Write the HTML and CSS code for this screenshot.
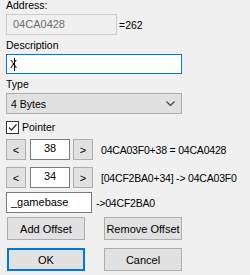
FILE: index.html
```html
<!DOCTYPE html>
<html lang="en">
<head>
  <meta charset="UTF-8">
  <title>Change address</title>
  <link rel="stylesheet" href="styles.css">
</head>
<body>
  <div class="dialog">
    <div class="label first">Address:</div>
    <div class="addr-row">
      <div class="addr-box">04CA0428</div>
      <span class="addr-val">=262</span>
    </div>

    <div class="label">Description</div>
    <div class="desc-box">X<span class="caret"></span></div>

    <div class="label">Type</div>
    <div class="select">
      <span>4 Bytes</span>
      <svg width="9" height="5" viewBox="0 0 9 5"><path d="M0.5 0.5 L4.5 4.5 L8.5 0.5" fill="none" stroke="#444" stroke-width="1.2"/></svg>
    </div>

    <div class="check-row">
      <span class="checkbox">
        <svg width="11" height="11" viewBox="0 0 11 11"><path d="M2 5.5 L4.5 8 L9.5 2.5" fill="none" stroke="#333" stroke-width="1.3"/></svg>
      </span>
      <span>Pointer</span>
    </div>

    <div class="offset-row">
      <button class="arrow">&lt;</button>
      <div class="offset">38</div>
      <button class="arrow">&gt;</button>
      <span class="info">04CA03F0+38 = 04CA0428</span>
    </div>
    <div class="offset-row second">
      <button class="arrow">&lt;</button>
      <div class="offset">34</div>
      <button class="arrow">&gt;</button>
      <span class="info">[04CF2BA0+34] -&gt; 04CA03F0</span>
    </div>

    <div class="base-row">
      <div class="base">_gamebase</div>
      <span class="info">-&gt;04CF2BA0</span>
    </div>

    <div class="btn-row">
      <button class="btn">Add Offset</button>
      <button class="btn">Remove Offset</button>
    </div>
    <div class="btn-row last">
      <button class="btn default">OK</button>
      <button class="btn">Cancel</button>
    </div>
  </div>
</body>
</html>
```

FILE: styles.css
```css
body {
  margin: 0;
  background-color: #f0f0f0;
  font-family: "Liberation Sans", Arial, sans-serif;
  font-size: 10.5px;
  color: #000;
  overflow: hidden;
}
.dialog {
  display: flex;
  flex-direction: column;
  padding-left: 6px;
  width: 176px;
}
.label {
  height: 13px;
  line-height: 13px;
  margin-top: 4px;
}
.label.first {
  margin-top: -1px;
  height: 12px;
}
.addr-row {
  display: flex;
  align-items: center;
  width: 200px;
  margin-top: 3px;
}
.addr-box {
  width: 103px;
  height: 19px;
  line-height: 19px;
  padding-left: 6px;
  border: 1px solid #cccccc;
  color: #6d6d6d;
  font-size: 11px;
}
.addr-val {
  margin-left: 2px;
}
.desc-box {
  margin-top: 2px;
  height: 18px;
  line-height: 18px;
  padding-left: 3px;
  background: #fff;
  border: 1px solid #0078d7;
  display: flex;
  align-items: center;
}
.caret {
  display: inline-block;
  width: 1px;
  height: 13px;
  background: #000;
  margin-left: -3px;
}
.select {
  margin-top: 2px;
  height: 19px;
  padding: 0 6px 0 4px;
  background: #e1e1e1;
  border: 1px solid #adadad;
  display: flex;
  align-items: center;
  justify-content: space-between;
}
.check-row {
  display: flex;
  align-items: center;
  gap: 3px;
  margin-top: 6px;
  height: 14px;
}
.checkbox {
  width: 11px;
  height: 11px;
  background: #fff;
  border: 1px solid #333;
  display: flex;
}
.offset-row {
  display: flex;
  align-items: center;
  margin-top: 5px;
  width: 240px;
  height: 21px;
}
.offset-row.second {
  margin-top: 7px;
}
.arrow {
  width: 20px;
  height: 21px;
  padding: 0;
  background: #e1e1e1;
  border: 1px solid #adadad;
  font-family: inherit;
  font-size: 11px;
  color: #000;
}
.offset {
  width: 38px;
  height: 19px;
  margin: 0 3px 0 4px;
  line-height: 17px;
  text-align: center;
  background: #fff;
  border: 1px solid #7a7a7a;
  font-size: 11px;
}
.info {
  margin-left: 8px;
  white-space: nowrap;
  letter-spacing: -0.2px;
}
.base-row {
  display: flex;
  align-items: center;
  margin-top: 4px;
  width: 240px;
}
.base {
  width: 80px;
  height: 19px;
  line-height: 19px;
  padding-left: 4px;
  background: #fff;
  border: 1px solid #7a7a7a;
  font-size: 11px;
}
.base-row .info {
  margin-left: 4px;
}
.btn-row {
  display: flex;
  justify-content: space-between;
  margin-top: 4px;
  padding-left: 1px;
}
.btn-row.last {
  margin-top: 8px;
}
.btn {
  width: 78px;
  height: 23px;
  padding: 0;
  background: #e1e1e1;
  border: 1px solid #adadad;
  font-family: inherit;
  font-size: 11px;
  color: #000;
}
.btn.default {
  border: 2px solid #0078d7;
}
```
